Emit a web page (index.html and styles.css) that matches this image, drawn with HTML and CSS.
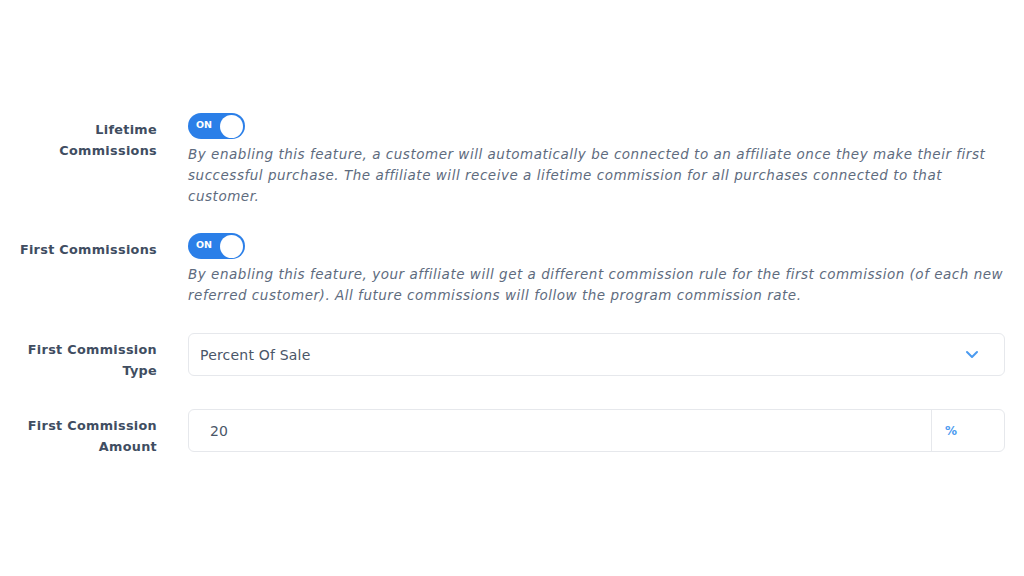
FILE: index.html
```html
<!DOCTYPE html>
<html lang="en">
<head>
  <meta charset="UTF-8">
  <title>Commission Settings</title>
  <link rel="stylesheet" href="styles.css">
</head>
<body>

<div class="settings">
  <div class="row">
    <div class="label">Lifetime<br>Commissions</div>
    <div class="field">
      <div class="toggle"><span>ON</span><i></i></div>
      <p class="help">By enabling this feature, a customer will automatically be connected to an affiliate once they make their first successful purchase. The affiliate will receive a lifetime commission for all purchases connected to that customer.</p>
    </div>
  </div>

  <div class="row row-last">
    <div class="label">First Commissions</div>
    <div class="field">
      <div class="toggle"><span>ON</span><i></i></div>
      <p class="help">By enabling this feature, your affiliate will get a different commission rule for the first commission (of each new referred customer). All future commissions will follow the program commission rate.</p>
    </div>
  </div>

  <div class="row row-input">
    <div class="label">First Commission<br>Type</div>
    <div class="field">
      <div class="select">
        <span>Percent Of Sale</span>
        <svg width="14" height="9" viewBox="0 0 14 9"><path d="M2 2l5 5 5-5" fill="none" stroke="#4b9bf0" stroke-width="2" stroke-linecap="round" stroke-linejoin="round"/></svg>
      </div>
    </div>
  </div>

  <div class="row row-input">
    <div class="label">First Commission<br>Amount</div>
    <div class="field">
      <div class="input-group">
        <span class="value">20</span>
        <span class="addon">%</span>
      </div>
    </div>
  </div>
</div>

</body>
</html>
```

FILE: styles.css
```css
body {
  margin: 0;
  background: #fff;
  font-family: "DejaVu Sans", sans-serif;
  color: #3e4b5e;
}
.settings {
  padding: 113px 19px 0 0;
}
.row {
  display: flex;
  gap: 31px;
  margin-bottom: 26px;
}
.row-last {
  margin-bottom: 27px;
}
.label {
  width: 157px;
  flex: none;
  text-align: right;
  font-size: 12.8px;
  letter-spacing: 0.3px;
  font-weight: bold;
  line-height: 21px;
  padding-top: 6px;
  color: #404d61;
}
.field {
  flex: 1;
}
.toggle {
  width: 57px;
  height: 26px;
  border-radius: 13px;
  background: #2b7fe8;
  display: flex;
  align-items: center;
  justify-content: space-between;
  padding: 0 2px 0 8px;
  box-sizing: border-box;
}
.toggle span {
  color: #fff;
  font-size: 9.5px;
  font-weight: bold;
  margin-top: -3px;
}
.toggle i {
  width: 23px;
  height: 23px;
  border-radius: 50%;
  background: #fff;
}
.help {
  margin: 5px 0 0;
  font-size: 13.5px;
  letter-spacing: 0.52px;
  font-style: italic;
  line-height: 21px;
  color: #5e6b7e;
}
.row-input {
  margin-bottom: 28px;
}
.row-input .label {
  padding-top: 6px;
}
.select, .input-group {
  height: 43px;
  border: 1px solid #e6e8ec;
  border-radius: 6px;
  box-sizing: border-box;
  display: flex;
  align-items: center;
  font-size: 14px;
  letter-spacing: 0.2px;
  color: #4a5668;
}
.select {
  justify-content: space-between;
  padding: 0 25px 0 11px;
}
.input-group .value {
  flex: 1;
  padding-left: 21px;
}
.input-group .addon {
  width: 73px;
  align-self: stretch;
  border-left: 1px solid #e6e8ec;
  display: flex;
  align-items: center;
  padding-left: 13px;
  box-sizing: border-box;
  color: #4b9bf0;
  font-weight: bold;
  font-size: 12px;
}
```
